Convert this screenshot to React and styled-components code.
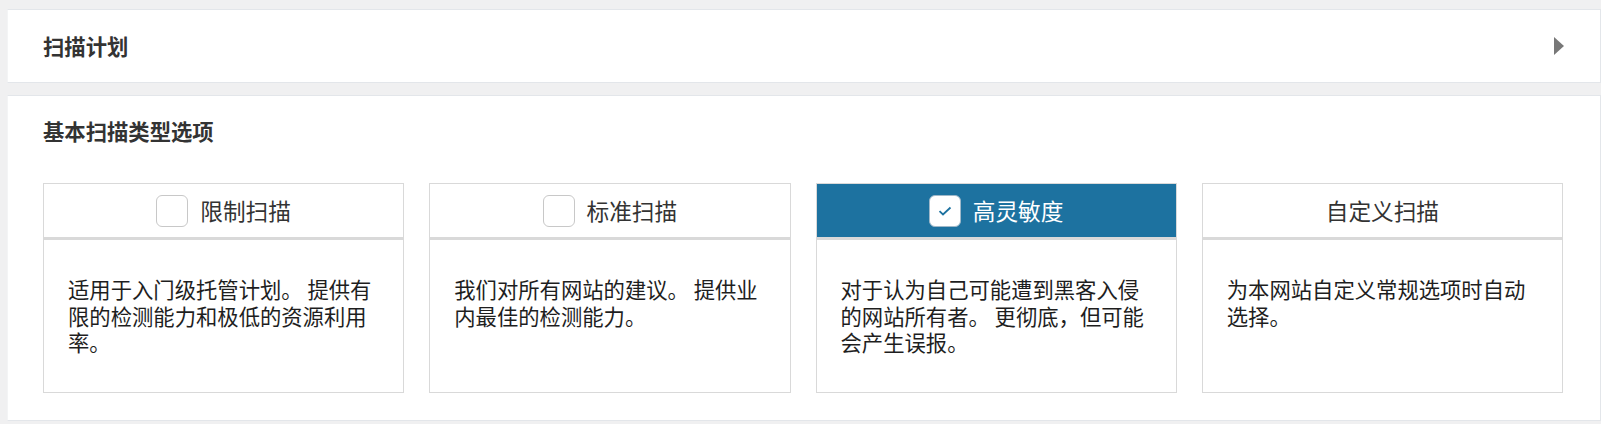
import React from 'react';
import styled, { createGlobalStyle } from 'styled-components';

const GlobalStyle = createGlobalStyle`
    html, body {
        margin: 0;
        padding: 0;
        background: #f0f0f1;
    }
    body {
        font-family: "Noto Sans CJK SC", "Noto Sans", sans-serif;
        color: #2c2c2c;
    }
`

const Page = styled.div`
    padding: 9px 0 0 7px;
    display: flex;
    flex-direction: column;
    gap: 12px;
`

const Panel = styled.section`
    background: #fff;
    border: 1px solid #e3e6ea;
    border-left-color: #f3f4f5;
    padding: ${props => props.$pad};
`

const PanelHead = styled.div`
    display: flex;
    align-items: center;
    justify-content: space-between;
`

const Title = styled.h2`
    margin: 0;
    font-size: 21.33px;
    line-height: 28px;
    font-weight: 700;
    color: #333;
`

const Caret = styled.svg`
    width: 10px;
    height: 18px;
    display: block;
`

const Grid = styled.div`
    display: grid;
    grid-template-columns: repeat(4, 1fr);
    gap: 25px;
    margin-top: 38px;
`

const Card = styled.div`
    border: 1px solid #d9d9d9;
    background: #fff;
    display: flex;
    flex-direction: column;
`

const CardHead = styled.div`
    height: 53px;
    display: flex;
    align-items: center;
    justify-content: center;
    gap: 12px;
    background: ${props => props.$active ? '#1d72a0' : '#fff'};
    color: ${props => props.$active ? '#fff' : '#333'};
    border-bottom: 3px solid #d9d9d9;
    font-size: 22.67px;
    line-height: 30px;
`

const Box = styled.span`
    width: 32px;
    height: 32px;
    box-sizing: border-box;
    border: 1.5px solid ${props => props.$active ? '#9fb8c9' : '#c8c8c8'};
    border-radius: 6px;
    background: #fff;
    display: flex;
    align-items: center;
    justify-content: center;
`

const CardBody = styled.p`
    margin: 0;
    padding: 36px 24px;
    font-size: 21.33px;
    line-height: 26.67px;
    color: #1e1e1e;
`

const options = [
    { label: '限制扫描', box: true, text: '适用于入门级托管计划。 提供有限的检测能力和极低的资源利用率。' },
    { label: '标准扫描', box: true, text: '我们对所有网站的建议。 提供业内最佳的检测能力。' },
    { label: '高灵敏度', box: true, active: true, text: '对于认为自己可能遭到黑客入侵的网站所有者。 更彻底，但可能会产生误报。' },
    { label: '自定义扫描', box: false, text: '为本网站自定义常规选项时自动选择。' },
]

function Check() {
    return (
        <svg width="14" height="10" viewBox="0 0 14 10">
            <path d="M1.5 5.2 L5 8.5 L12.5 1.5" fill="none" stroke="#1d72a0" strokeWidth="1.8" />
        </svg>
    )
}

export default function App() {
    return (
        <Page>
            <GlobalStyle />
            <Panel $pad="22px 36px 22px 35px">
                <PanelHead>
                    <Title>扫描计划</Title>
                    <Caret viewBox="0 0 10 18">
                        <polygon points="0,0 10,9 0,18" fill="#787878" />
                    </Caret>
                </PanelHead>
            </Panel>
            <Panel $pad="21px 37px 27px 35px">
                <Title>基本扫描类型选项</Title>
                <Grid>
                    {options.map(o => (
                        <Card key={o.label}>
                            <CardHead $active={o.active}>
                                {o.box && <Box $active={o.active}>{o.active && <Check />}</Box>}
                                <span>{o.label}</span>
                            </CardHead>
                            <CardBody>{o.text}</CardBody>
                        </Card>
                    ))}
                </Grid>
            </Panel>
        </Page>
    )
}
